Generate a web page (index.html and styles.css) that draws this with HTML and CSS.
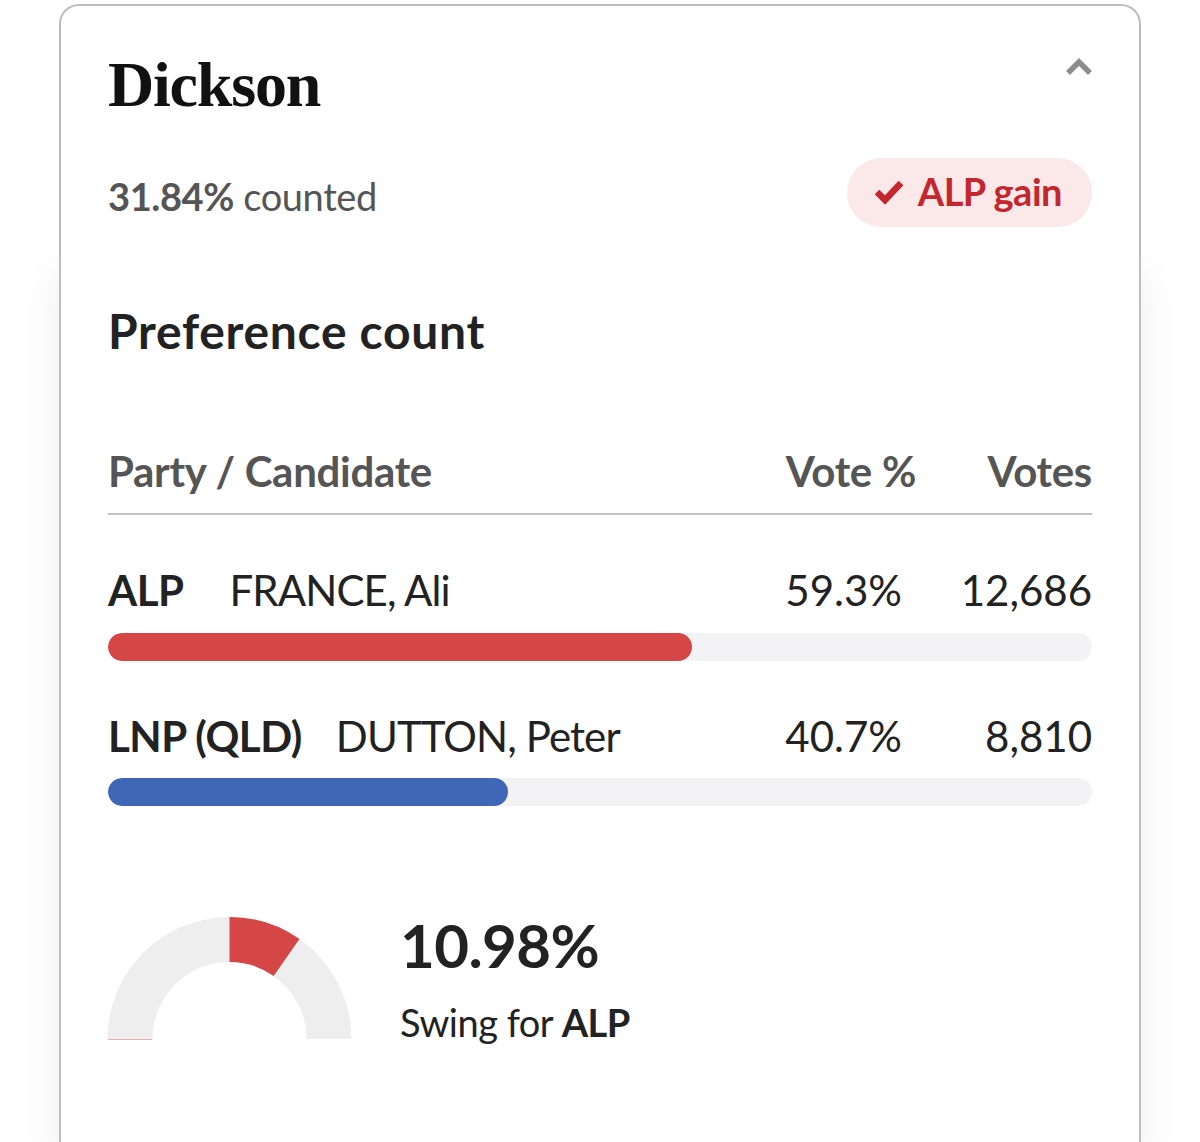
FILE: index.html
```html
<!DOCTYPE html>
<html lang="en">
<head>
<meta charset="utf-8">
<title>Dickson</title>
<link rel="stylesheet" href="styles.css">
</head>
<body>
<div class="card">
  <section class="card-head">
    <div class="title-row">
      <h1 class="title">Dickson</h1>
      <svg class="chevron" width="28" height="18" viewBox="0 0 28 18" aria-hidden="true">
        <polyline points="3,15 14,4 25,15" fill="none" stroke="#8c8c8c" stroke-width="5.5"/>
      </svg>
    </div>
    <div class="status-row">
      <p class="counted"><strong>31.84%</strong> counted</p>
      <div class="badge">
        <svg class="badge-check" width="30" height="26" viewBox="0 0 30 26" aria-hidden="true">
          <polyline points="3,13 11,21 27,4" fill="none" stroke="#c4262e" stroke-width="6.5"/>
        </svg>
        <span>ALP gain</span>
      </div>
    </div>
  </section>
  <section class="card-body">
    <h2 class="section-title">Preference count</h2>
    <div class="table-head">
      <span class="col-name">Party / Candidate</span>
      <span class="col-pct">Vote %</span>
      <span class="col-votes">Votes</span>
    </div>
    <div class="result">
      <div class="result-line">
        <span class="col-name"><strong class="party">ALP</strong><span class="cand cand-alp">FRANCE, Ali</span></span>
        <span class="col-pct val">59.3%</span>
        <span class="col-votes">12,686</span>
      </div>
      <div class="bar"><div class="bar-fill alp" style="width:59.3%"></div></div>
    </div>
    <div class="result">
      <div class="result-line">
        <span class="col-name"><strong class="party">LNP (QLD)</strong><span class="cand cand-lnp">DUTTON, Peter</span></span>
        <span class="col-pct val">40.7%</span>
        <span class="col-votes">8,810</span>
      </div>
      <div class="bar"><div class="bar-fill lnp" style="width:40.7%"></div></div>
    </div>
    <div class="swing">
      <svg class="gauge" width="245" height="123" viewBox="0 0 245 123" aria-hidden="true">
        <path d="M0.5,122 A122,122 0 0 1 244.5,122 L199.5,122 A77,77 0 0 0 45.5,122 Z" fill="#eeeeee"/>
        <path d="M122.5,0 A122,122 0 0 1 192.48,22.06 L166.67,58.92 A77,77 0 0 0 122.5,45 Z" fill="#d54646"/>
        <line x1="1" y1="122.5" x2="45" y2="122.5" stroke="#eab0b0" stroke-width="1"/>
      </svg>
      <div class="swing-text">
        <div class="swing-value">10.98%</div>
        <div class="swing-label">Swing for <strong>ALP</strong></div>
      </div>
    </div>
  </section>
</div>
</body>
</html>
```
FILE: styles.css
```css
* { box-sizing: border-box; }
html, body { margin: 0; padding: 0; background: #ffffff; }
body {
  font-family: "Lato", "Noto Sans", sans-serif;
  color: #222222;
  line-height: 1.2;
  padding-top: 4px;
}
.card {
  margin-left: 59px;
  width: 1082px;
}
.card-head {
  border: 2px solid #bdbdbd;
  border-bottom: none;
  border-radius: 20px 20px 0 0;
  padding: 41px 47px 16px 47px;
  height: 239px;
  position: relative;
  z-index: 1;
  background: #fff;
}
.title-row {
  display: flex;
  justify-content: space-between;
  align-items: flex-start;
}
.title {
  margin: 0;
  font-family: "Liberation Serif", "Times New Roman", serif;
  font-weight: 700;
  font-size: 64px;
  line-height: 1.2;
  letter-spacing: -1.2px;
  color: #111111;
}
.chevron { margin-top: 11px; margin-right: -1px; }
.status-row {
  display: flex;
  justify-content: space-between;
  align-items: flex-start;
  margin-top: 34px;
}
.counted {
  margin: 16px 0 0 0;
  font-size: 38px;
  letter-spacing: -0.4px;
  color: #555555;
}
.counted strong { font-weight: 700; }
.badge {
  display: flex;
  align-items: center;
  gap: 14px;
  height: 69px;
  padding: 0 30px 0 27px;
  border-radius: 35px;
  background: #fbe8e8;
  color: #c4262e;
  font-weight: 700;
  font-size: 38px;
}
.badge span { margin-top: -2px; letter-spacing: -0.5px; }
.card-body {
  border-left: 2px solid #bdbdbd;
  border-right: 2px solid #bdbdbd;
  padding: 60px 47px 100px 47px;
  box-shadow: 0 26px 40px rgba(0, 0, 0, 0.07);
  background: #fff;
}
.section-title {
  margin: 0;
  font-size: 48px;
  line-height: 55px;
  font-weight: 700;
  letter-spacing: 0.7px;
  color: #222222;
}
.table-head {
  display: grid;
  grid-template-columns: 1fr 200px 176px;
  margin-top: 88px;
  padding-bottom: 17px;
  border-bottom: 2px solid #c2c2c2;
  font-size: 42px;
  font-weight: 700;
  letter-spacing: -0.3px;
  color: #555555;
}
.col-pct, .col-votes { text-align: right; }
.result { margin-top: 50px; }
.result-line {
  display: grid;
  grid-template-columns: 1fr 200px 176px;
  font-size: 42px;
  color: #222222;
}
.party { font-weight: 700; margin-right: 42px; letter-spacing: -0.5px; }
.cand { letter-spacing: -0.9px; }
.cand-alp { margin-left: 4px; }
.cand-lnp { margin-left: -8px; }
.val { padding-right: 14px; }
.bar {
  margin-top: 17px;
  height: 28px;
  border-radius: 14px;
  background: #f3f3f5;
  overflow: hidden;
}
.bar-fill { height: 100%; border-radius: 14px; }
.bar-fill.alp { background: #d54646; }
.bar-fill.lnp { background: #4067b5; }
.swing {
  display: flex;
  align-items: flex-start;
  gap: 48px;
  margin-top: 111px;
}
.gauge { display: block; margin-left: -1px; }
.swing-text { margin-top: -8px; }
.swing-value {
  font-size: 60px;
  font-weight: 700;
  letter-spacing: -0.6px;
  color: #222222;
}
.swing-label {
  margin-top: 19px;
  font-size: 38px;
  letter-spacing: -0.5px;
  color: #222222;
}
.swing-label strong { font-weight: 700; }
```
